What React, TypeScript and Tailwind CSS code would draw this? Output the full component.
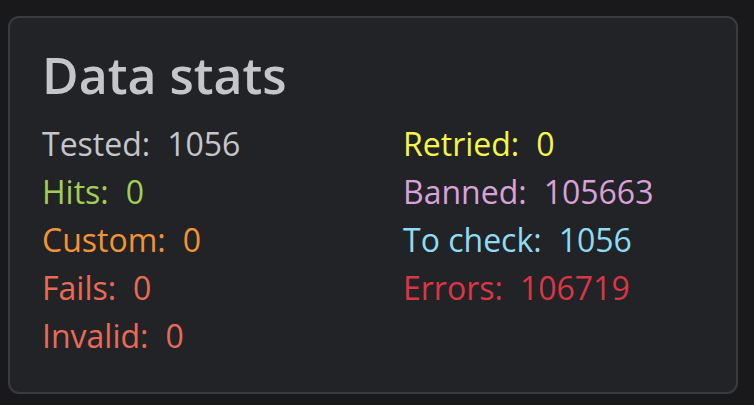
import React from "react";

type Stat = { label: string; value: string; color: string };

const left: Stat[] = [
  { label: "Tested:", value: "1056", color: "text-[#c5c6c9]" },
  { label: "Hits:", value: "0", color: "text-[#a3cd55]" },
  { label: "Custom:", value: "0", color: "text-[#f29436]" },
  { label: "Fails:", value: "0", color: "text-[#ea6a58]" },
  { label: "Invalid:", value: "0", color: "text-[#ea6a58]" },
];

const right: Stat[] = [
  { label: "Retried:", value: "0", color: "text-[#f6f64a]" },
  { label: "Banned:", value: "105663", color: "text-[#d8a2d8]" },
  { label: "To check:", value: "1056", color: "text-[#8edcf4]" },
  { label: "Errors:", value: "106719", color: "text-[#dc3545]" },
];

function Row({ s }: { s: Stat }) {
  return (
    <div className={`flex h-[48px] items-center gap-[17px] leading-[48px] ${s.color}`}>
      <span>{s.label}</span>
      <span>{s.value}</span>
    </div>
  );
}

export default function App() {
  return (
    <div
      className="h-[405px] w-[754px] bg-[#19191b] px-[8px] pt-[16px] pb-[11px]"
      style={{ fontFamily: '"Open Sans", sans-serif' }}
    >
      <div className="h-[378px] w-[730px] rounded-[11px] border-2 border-[#3a3b3e] bg-[#222326] pl-[32px] pt-[33px]">
        <h1 className="text-[50px] font-semibold leading-[48px] text-[#c5c6c9]">Data stats</h1>
        <div className="mt-[21px] grid grid-cols-[361px_1fr] text-[32px] font-normal">
          <div className="flex flex-col">
            {left.map((s) => (
              <Row key={s.label} s={s} />
            ))}
          </div>
          <div className="flex flex-col">
            {right.map((s) => (
              <Row key={s.label} s={s} />
            ))}
          </div>
        </div>
      </div>
    </div>
  );
}
